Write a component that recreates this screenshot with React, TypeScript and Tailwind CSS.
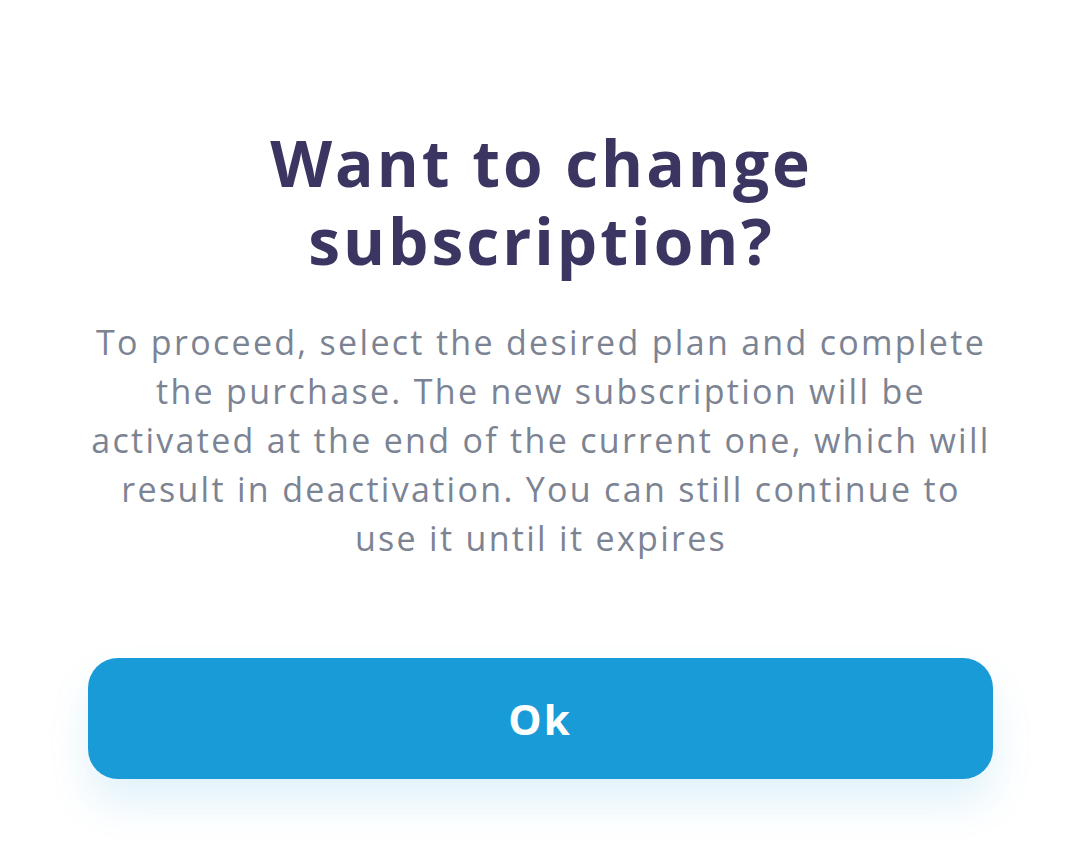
import React from 'react';

const bodyLines = [
  'To proceed, select the desired plan and complete',
  'the purchase. The new subscription will be',
  'activated at the end of the current one, which will',
  'result in deactivation. You can still continue to',
  'use it until it expires',
];

const App: React.FC = () => {
  return (
    <div className="w-[1080px] h-[865px] bg-white flex flex-col items-center overflow-hidden font-['Open_Sans',sans-serif]">
      {/* Title */}
      <h1 className="mt-[124px] pl-[3px] text-center text-[64px] leading-[78px] font-bold text-[#3b3561] tracking-[3px]">
        Want to change
        <br />
        subscription?
      </h1>

      {/* Description */}
      <p className="mt-[38px] pl-[2px] text-center text-[34px] leading-[49px] text-[#7c8393] tracking-[2.3px]">
        {bodyLines.map((line, i) => (
          <React.Fragment key={i}>
            {line}
            {i < bodyLines.length - 1 && <br />}
          </React.Fragment>
        ))}
      </p>

      {/* Action */}
      <button className="mt-[95px] w-[905px] h-[121px] rounded-[30px] bg-[#189bd7] text-white text-[42px] font-bold tracking-[2px] shadow-[0_24px_40px_rgba(24,155,215,0.13)]">
        Ok
      </button>
    </div>
  );
};

export default App;
